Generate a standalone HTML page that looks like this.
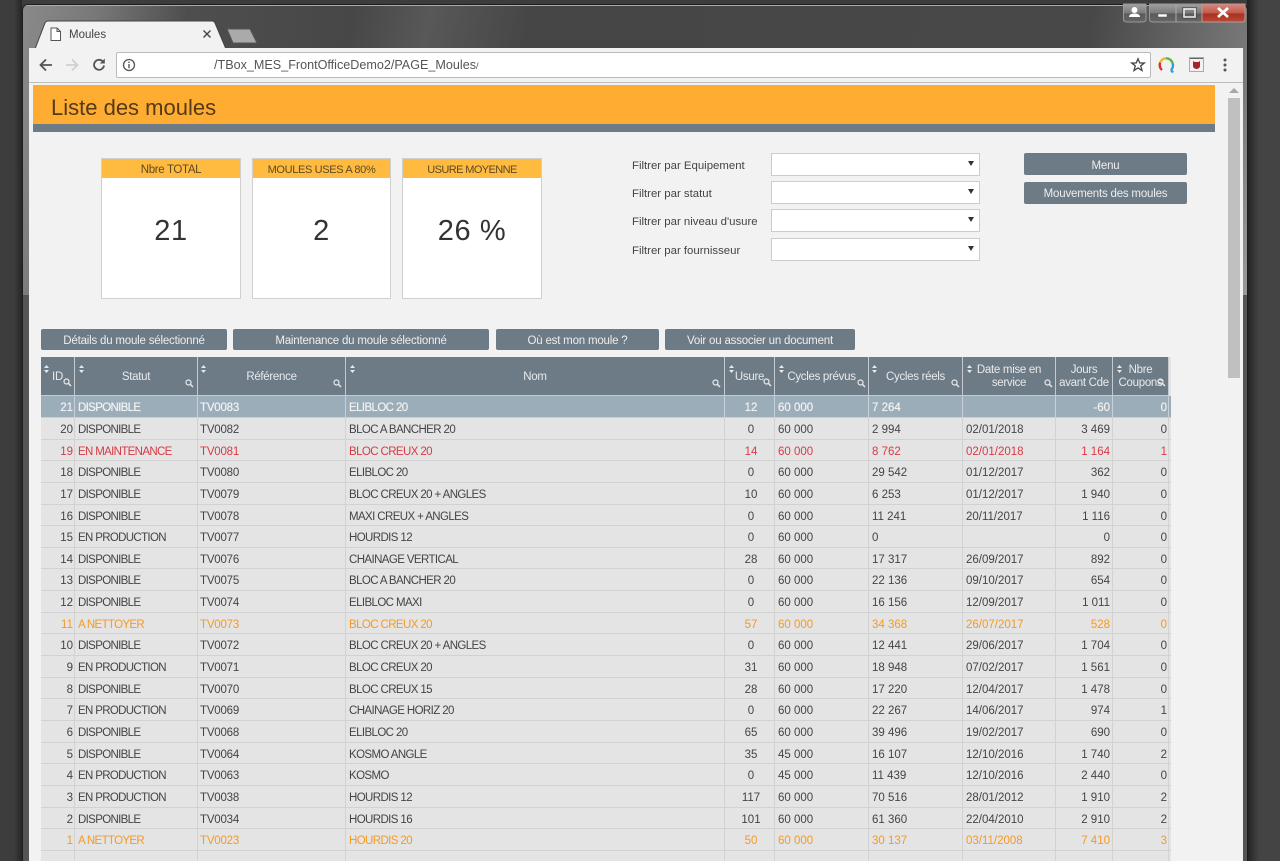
<!DOCTYPE html>
<html lang="fr"><head><meta charset="utf-8"><title>Moules</title>
<style>
*{box-sizing:border-box}
html,body{margin:0;padding:0;width:1280px;height:861px;overflow:hidden;background:#3c3c3c}
body{position:relative;font-family:"Liberation Sans",sans-serif;color:#333}
.a{position:absolute}
#bgl{left:0;top:0;width:22px;height:861px;background:linear-gradient(90deg,#3d3d3d 0,#3d3d3d 14px,#262626 22px)}
#bgr{left:1247px;top:0;width:33px;height:861px;background:linear-gradient(90deg,#222 0,#444 12px,#444 100%)}
#frame{left:22px;top:4px;width:1226px;height:857px;background:#555;border-radius:6px 6px 0 0;border:1px solid #1e1e1e;border-bottom:0;overflow:hidden}
#fr2{left:0;top:0;width:100%;height:290px;background:linear-gradient(100deg,#8a8a8a 0,#777 6%,#4e4e4e 13%,#474747 26%,#585858 32%,#464646 40%,#484848 84%,#7a7a7a 97%,#9a9a9a 100%)}
#fr3{left:0;top:0;width:100%;height:1px;background:#aaa}
#page{left:29px;top:83px;width:1214px;height:778px;background:#f2f2f2}
#tool{left:29px;top:48px;width:1214px;height:35px;background:#f2f2f2;border-bottom:1px solid #bdbdbd}
#url{left:116px;top:52px;width:1035px;height:26px;background:#fff;border:1px solid #bbb;border-radius:2px}
.urlt{left:214px;top:57px;font-size:12.6px;line-height:16px;color:#555;white-space:nowrap}
.tabt{left:69px;top:28px;font-size:11.5px;line-height:14px;color:#444}
#title{left:33px;top:85px;width:1182px;height:39px;background:#ffac33;font-size:22px;line-height:45px;padding-left:18px;color:#543a16}
#sub{left:33px;top:124px;width:1182px;height:8px;background:#6d7b87}
.card{top:158px;width:140px;height:141px;background:#fff;border:1px solid #d0d0d0}
.card b{display:block;font-weight:400;height:19px;background:#ffbb3f;text-align:center;font-size:11.5px;line-height:22px;color:#5d4a24;letter-spacing:-.35px}
.card i{display:block;font-style:normal;text-align:center;font-size:29px;line-height:34px;margin-top:36px;color:#333;letter-spacing:.6px}
.lab{left:632px;font-size:11.4px;color:#444;white-space:nowrap;line-height:14px}
.sel{left:771px;width:209px;height:23px;background:#fff;border:1px solid #ccc}
.sel:after{content:"";position:absolute;right:5px;top:7px;border:3px solid transparent;border-top:5px solid #333;border-bottom:0}
.btn{background:#6d7b87;color:#eee;font-size:11.5px;text-align:center;line-height:24px;height:21px;border-radius:2px;letter-spacing:-.2px;white-space:nowrap}
#tbl{left:41px;top:357px;width:1130px;height:504px;background:#e4e4e4;overflow:hidden}
.r{display:grid;grid-template-columns:34px 123px 148px 379px 50px 94px 94px 93px 57px 56px 2px;height:21.65px;font-size:11.5px;line-height:24px;color:#444}
.r>div{border-right:1px solid #d2d2d2;border-bottom:1px solid #d2d2d2;padding:0 3px;white-space:nowrap;overflow:hidden;position:relative}
.r>div:nth-child(1),.r>div:nth-child(9),.r>div:nth-child(10){text-align:right}
.r>div:nth-child(1),.r>div:nth-child(10){padding-right:1px}
.r>div:nth-child(9){padding-right:2px}
.r>div:nth-child(5){text-align:center;padding-left:6px;padding-right:3px}
.r>div:nth-child(2){letter-spacing:-.66px}
.r>div:nth-child(4){letter-spacing:-.6px}
.r>div:nth-child(3){letter-spacing:-.2px;padding-left:2px}
.h{height:39px;background:#6d7b87;color:#eaeaea;line-height:13px;font-size:11.5px}
.h>div{background:#6d7b87;border-right:1px solid #c5cad0;border-bottom:1px solid #c5cad0;text-align:center!important;letter-spacing:-.3px!important;padding:0 2px!important}
.h>div span{position:absolute;left:0;right:0;top:14px}
.h>div span.t{top:7px}
.sl{background:#9badb9;color:#f2f2f2;height:22px;text-shadow:0 0 .6px #f2f2f2}
.sl>div{border-color:#c6d0d8}
.red{color:#d83a45}.or{color:#f49a25}
#sb{left:1228px;top:98px;width:12px;height:280px;background:#c0c0c0}
#sba{left:1229px;top:88px;border:5px solid transparent;border-bottom:5px solid #a8a8a8;border-top:0}
</style></head><body>
<div class="a" id="bgl"></div><div class="a" id="bgr"></div>
<div class="a" id="frame"><div class="a" id="fr2"></div><div class="a" id="fr3"></div></div>

<!-- window controls -->
<svg class="a" style="left:1120px;top:3px" width="130" height="22" viewBox="0 0 130 22">
<defs><linearGradient id="g" x1="0" y1="0" x2="0" y2="1"><stop offset="0" stop-color="#a0a0a0"/><stop offset=".5" stop-color="#7b7b7b"/><stop offset=".55" stop-color="#5a5a5a"/><stop offset="1" stop-color="#666"/></linearGradient>
<linearGradient id="gr" x1="0" y1="0" x2="0" y2="1"><stop offset="0" stop-color="#d48a7e"/><stop offset=".5" stop-color="#c45a4a"/><stop offset=".55" stop-color="#a8301f"/><stop offset="1" stop-color="#bb4a38"/></linearGradient></defs>
<path d="M3.500 1V16Q3.500 19 7 19H22Q26 19 26 16V1Z" fill="url(#g)" stroke="#999"/>
<path d="M29.500 1V16Q29.500 19 33 19H122Q125 19 125 16V1Z" fill="url(#g)" stroke="#999"/>
<path d="M82 1H125V16Q125 19 122 19H82Z" fill="url(#gr)" stroke="#b99"/>
<path d="M56 1V19" stroke="#aaa"/>
<circle cx="14.500" cy="7" r="3" fill="#fff"/><path d="M9 14Q9 10.500 14.500 10.500T20 14Z" fill="#fff"/>
<rect x="38" y="11" width="9" height="3" fill="#fff" stroke="#555" stroke-width=".5"/>
<rect x="64" y="6" width="11" height="8" fill="none" stroke="#eee" stroke-width="1.500"/><rect x="62.500" y="4.500" width="14" height="11" fill="none" stroke="#444" stroke-width=".6"/>
<path d="M98 5L108 14M108 5L98 14" stroke="#fff" stroke-width="2.800"/>
</svg>

<!-- tab strip -->
<svg class="a" style="left:30px;top:20px" width="240" height="30" viewBox="0 0 240 30">
<path d="M5 29L15 3Q16 1 18 1H182Q184 1 185 3L196 29Z" fill="#f2f2f2" stroke="#444" stroke-width="1"/>
<path d="M197 9H220L227 23H203Z" fill="#aaa" stroke="#555" stroke-linejoin="round"/>
</svg>
<svg class="a" style="left:49px;top:27px" width="13" height="15" viewBox="0 0 13 15"><path d="M2 1H8L11.500 4.500V13.500H2ZM8 1V4.500H11.500" fill="#fff" stroke="#555"/></svg>
<div class="a tabt">Moules</div>
<svg class="a" style="left:201px;top:28px" width="12" height="12" viewBox="0 0 12 12"><path d="M2.500 2.500L9.500 9.500M9.500 2.500L2.500 9.500" stroke="#444" stroke-width="1.400"/></svg>

<div class="a" id="tool"></div>
<div class="a" id="url"></div>
<svg class="a" style="left:38px;top:57px" width="16" height="16" viewBox="0 0 16 16"><path d="M14 8H3M8 2.500L2.500 8L8 13.500" fill="none" stroke="#555" stroke-width="1.800"/></svg>
<svg class="a" style="left:64px;top:57px" width="16" height="16" viewBox="0 0 16 16"><path d="M2 8H13M8 2.500L13.500 8L8 13.500" fill="none" stroke="#cfcfcf" stroke-width="1.800"/></svg>
<svg class="a" style="left:91px;top:57px" width="16" height="16" viewBox="0 0 16 16"><path d="M13 8.500A5 5 0 1 1 11.500 4.200" fill="none" stroke="#555" stroke-width="1.800"/><path d="M13.800 1.500V6.500H8.800Z" fill="#555"/></svg>
<svg class="a" style="left:122px;top:58px" width="14" height="14" viewBox="0 0 14 14"><circle cx="7" cy="7" r="5.500" fill="none" stroke="#555" stroke-width="1.300"/><path d="M7 6V10.300M7 3.600V5" stroke="#555" stroke-width="1.400"/></svg>
<div class="a urlt">/TBox_MES_FrontOfficeDemo2/PAGE_Moules<span style="font-size:9px">/</span></div>
<svg class="a" style="left:1130px;top:57px" width="16" height="16" viewBox="0 0 16 16"><path d="M8 1.800L9.800 6H14.300L10.700 8.900L12 13.500L8 10.900L4 13.500L5.300 8.900L1.700 6H6.200Z" fill="none" stroke="#444" stroke-width="1.300"/></svg>
<svg class="a" style="left:1158px;top:56px" width="17" height="18" viewBox="0 0 17 18" fill="none" stroke-width="2.400"><path d="M4 14A6.500 6.500 0 0 1 2.200 6.500" stroke="#d6322e"/><path d="M2.200 6.500A6.500 6.500 0 0 1 8 2.300" stroke="#f0b92c"/><path d="M8 2.300A6.500 6.500 0 0 1 14.500 7" stroke="#58b947"/><path d="M14.500 7A6.500 6.500 0 0 1 13 14" stroke="#2f9fd0"/><path d="M13 14L15 16.500" stroke="#2f9fd0"/></svg>
<svg class="a" style="left:1189px;top:57px" width="15" height="15" viewBox="0 0 15 15"><rect x=".5" y=".5" width="14" height="14" fill="#f6f0f0" stroke="#aaa"/><path d="M1 1.500H14" stroke="#666"/><path d="M4 4L5.500 5H9.500L11 4V9Q11 11.500 7.500 12Q4 11.500 4 9Z" fill="#a3242c"/></svg>
<svg class="a" style="left:1222px;top:57px" width="6" height="16" viewBox="0 0 6 16"><circle cx="3" cy="3" r="1.500" fill="#555"/><circle cx="3" cy="8" r="1.500" fill="#555"/><circle cx="3" cy="13" r="1.500" fill="#555"/></svg>

<div class="a" id="page"></div>
<div class="a" id="title">Liste des moules</div>
<div class="a" id="sub"></div>
<div class="a" id="sba"></div><div class="a" id="sb"></div>

<div class="a card" style="left:101px"><b>Nbre TOTAL</b><i>21</i></div>
<div class="a card" style="left:252px;width:139px"><b style="font-size:11px">MOULES USES A 80%</b><i>2</i></div>
<div class="a card" style="left:402px"><b style="font-size:11px;letter-spacing:-.6px">USURE MOYENNE</b><i>26 %</i></div>

<div class="a lab" style="top:159px">Filtrer par Equipement</div><div class="a sel" style="top:153px"></div>
<div class="a lab" style="top:187px">Filtrer par statut</div><div class="a sel" style="top:181px"></div>
<div class="a lab" style="top:215px">Filtrer par niveau d'usure</div><div class="a sel" style="top:209px"></div>
<div class="a lab" style="top:244px">Filtrer par fournisseur</div><div class="a sel" style="top:238px"></div>

<div class="a btn" style="left:1024px;top:153px;width:163px;height:22px;line-height:26px">Menu</div>
<div class="a btn" style="left:1024px;top:182px;width:163px;height:22px;line-height:24px">Mouvements des moules</div>
<div class="a btn" style="left:41px;top:329px;width:186px">Détails du moule sélectionné</div>
<div class="a btn" style="left:233px;top:329px;width:256px">Maintenance du moule sélectionné</div>
<div class="a btn" style="left:496px;top:329px;width:163px">Où est mon moule ?</div>
<div class="a btn" style="left:665px;top:329px;width:190px">Voir ou associer un document</div>

<div class="a" id="tbl">
<div class="r h">
<div><span>ID</span></div><div><span>Statut</span></div><div><span>Référence</span></div><div><span>Nom</span></div><div><span>Usure</span></div><div><span>Cycles prévus</span></div><div><span>Cycles réels</span></div><div><span class="t">Date mise en<br>service</span></div><div><span class="t">Jours<br>avant Cde</span></div><div><span class="t">Nbre<br>Coupons</span></div><div style="background:#e4e4e4;border:0;padding:0"></div>
</div>
<div class="r sl"><div>21</div><div>DISPONIBLE</div><div>TV0083</div><div>ELIBLOC 20</div><div>12</div><div>60 000</div><div>7 264</div><div></div><div>-60</div><div>0</div><div></div></div>
<div class="r"><div>20</div><div>DISPONIBLE</div><div>TV0082</div><div>BLOC A BANCHER 20</div><div>0</div><div>60 000</div><div>2 994</div><div>02/01/2018</div><div>3 469</div><div>0</div><div></div></div>
<div class="r red"><div>19</div><div>EN MAINTENANCE</div><div>TV0081</div><div>BLOC CREUX 20</div><div>14</div><div>60 000</div><div>8 762</div><div>02/01/2018</div><div>1 164</div><div>1</div><div></div></div>
<div class="r"><div>18</div><div>DISPONIBLE</div><div>TV0080</div><div>ELIBLOC 20</div><div>0</div><div>60 000</div><div>29 542</div><div>01/12/2017</div><div>362</div><div>0</div><div></div></div>
<div class="r"><div>17</div><div>DISPONIBLE</div><div>TV0079</div><div>BLOC CREUX 20 + ANGLES</div><div>10</div><div>60 000</div><div>6 253</div><div>01/12/2017</div><div>1 940</div><div>0</div><div></div></div>
<div class="r"><div>16</div><div>DISPONIBLE</div><div>TV0078</div><div>MAXI CREUX + ANGLES</div><div>0</div><div>60 000</div><div>11 241</div><div>20/11/2017</div><div>1 116</div><div>0</div><div></div></div>
<div class="r"><div>15</div><div>EN PRODUCTION</div><div>TV0077</div><div>HOURDIS 12</div><div>0</div><div>60 000</div><div>0</div><div></div><div>0</div><div>0</div><div></div></div>
<div class="r"><div>14</div><div>DISPONIBLE</div><div>TV0076</div><div>CHAINAGE VERTICAL</div><div>28</div><div>60 000</div><div>17 317</div><div>26/09/2017</div><div>892</div><div>0</div><div></div></div>
<div class="r"><div>13</div><div>DISPONIBLE</div><div>TV0075</div><div>BLOC A BANCHER 20</div><div>0</div><div>60 000</div><div>22 136</div><div>09/10/2017</div><div>654</div><div>0</div><div></div></div>
<div class="r"><div>12</div><div>DISPONIBLE</div><div>TV0074</div><div>ELIBLOC MAXI</div><div>0</div><div>60 000</div><div>16 156</div><div>12/09/2017</div><div>1 011</div><div>0</div><div></div></div>
<div class="r or"><div>11</div><div>A NETTOYER</div><div>TV0073</div><div>BLOC CREUX 20</div><div>57</div><div>60 000</div><div>34 368</div><div>26/07/2017</div><div>528</div><div>0</div><div></div></div>
<div class="r"><div>10</div><div>DISPONIBLE</div><div>TV0072</div><div>BLOC CREUX 20 + ANGLES</div><div>0</div><div>60 000</div><div>12 441</div><div>29/06/2017</div><div>1 704</div><div>0</div><div></div></div>
<div class="r"><div>9</div><div>EN PRODUCTION</div><div>TV0071</div><div>BLOC CREUX 20</div><div>31</div><div>60 000</div><div>18 948</div><div>07/02/2017</div><div>1 561</div><div>0</div><div></div></div>
<div class="r"><div>8</div><div>DISPONIBLE</div><div>TV0070</div><div>BLOC CREUX 15</div><div>28</div><div>60 000</div><div>17 220</div><div>12/04/2017</div><div>1 478</div><div>0</div><div></div></div>
<div class="r"><div>7</div><div>EN PRODUCTION</div><div>TV0069</div><div>CHAINAGE HORIZ 20</div><div>0</div><div>60 000</div><div>22 267</div><div>14/06/2017</div><div>974</div><div>1</div><div></div></div>
<div class="r"><div>6</div><div>DISPONIBLE</div><div>TV0068</div><div>ELIBLOC 20</div><div>65</div><div>60 000</div><div>39 496</div><div>19/02/2017</div><div>690</div><div>0</div><div></div></div>
<div class="r"><div>5</div><div>DISPONIBLE</div><div>TV0064</div><div>KOSMO ANGLE</div><div>35</div><div>45 000</div><div>16 107</div><div>12/10/2016</div><div>1 740</div><div>2</div><div></div></div>
<div class="r"><div>4</div><div>EN PRODUCTION</div><div>TV0063</div><div>KOSMO</div><div>0</div><div>45 000</div><div>11 439</div><div>12/10/2016</div><div>2 440</div><div>0</div><div></div></div>
<div class="r"><div>3</div><div>EN PRODUCTION</div><div>TV0038</div><div>HOURDIS 12</div><div>117</div><div>60 000</div><div>70 516</div><div>28/01/2012</div><div>1 910</div><div>2</div><div></div></div>
<div class="r"><div>2</div><div>DISPONIBLE</div><div>TV0034</div><div>HOURDIS 16</div><div>101</div><div>60 000</div><div>61 360</div><div>22/04/2010</div><div>2 910</div><div>2</div><div></div></div>
<div class="r or"><div>1</div><div>A NETTOYER</div><div>TV0023</div><div>HOURDIS 20</div><div>50</div><div>60 000</div><div>30 137</div><div>03/11/2008</div><div>7 410</div><div>3</div><div></div></div>
<div class="r"><div></div><div></div><div></div><div></div><div></div><div></div><div></div><div></div><div></div><div></div><div></div></div>
</div>

<!-- sort + search icons in header -->
<svg class="a" style="left:41px;top:357px" width="1130" height="38" viewBox="0 0 1130 38" fill="#e8e8e8">
<defs><g id="so"><path d="M0 3L2.500 0L5 3ZM0 5L2.500 8L5 5Z"/></g>
<g id="mg"><circle cx="3.500" cy="3.500" r="2.500" fill="none" stroke="#e8e8e8" stroke-width="1.200"/><path d="M5.500 5.500L8 8" stroke="#e8e8e8" stroke-width="1.500"/></g></defs>
<use href="#so" x="3" y="8"/><use href="#so" x="38" y="8"/><use href="#so" x="160" y="8"/><use href="#so" x="309" y="8"/><use href="#so" x="688" y="8"/><use href="#so" x="738" y="8"/><use href="#so" x="831" y="8"/><use href="#so" x="926" y="8"/><use href="#so" x="1076" y="8"/>
<use href="#mg" x="22" y="21"/><use href="#mg" x="144" y="22"/><use href="#mg" x="292" y="22"/><use href="#mg" x="671" y="22"/><use href="#mg" x="722" y="21"/><use href="#mg" x="816" y="22"/><use href="#mg" x="910" y="22"/><use href="#mg" x="1003" y="22"/><use href="#mg" x="1116" y="21"/>
</svg>
</body></html>
